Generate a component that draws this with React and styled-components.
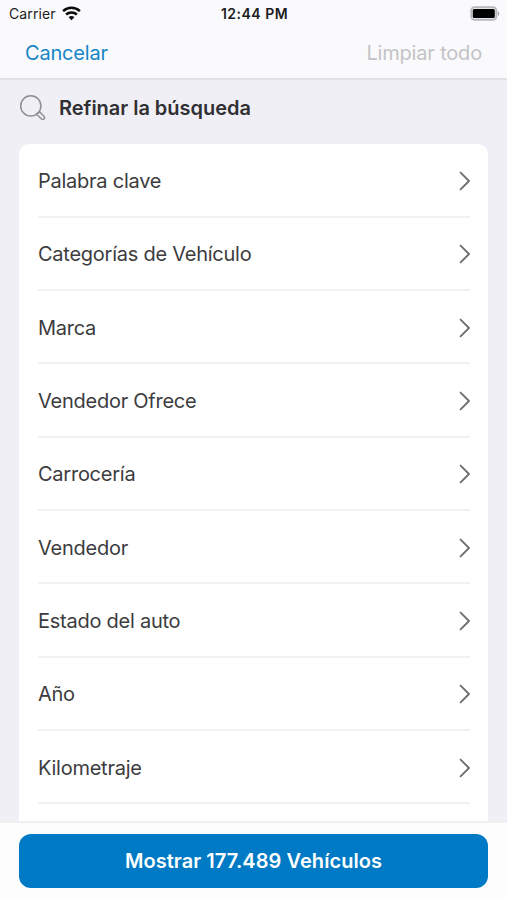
import styled, { createGlobalStyle } from "styled-components";

const GlobalStyle = createGlobalStyle`
    * {
        box-sizing: border-box;
    }
    body {
        margin: 0;
        font-family: Inter, "Liberation Sans", sans-serif;
        background: #f0eff5;
    }
`;

const Screen = styled.div`
    width: 100%;
    height: 100vh;
    display: flex;
    flex-direction: column;
    overflow: hidden;
    background: #f0eff5;
`;

const Header = styled.header`
    flex: none;
    height: 80px;
    background: #fafafc;
    border-bottom: 2px solid #e2e2e6;
`;

const StatusBar = styled.div`
    height: 27px;
    padding: 0 7px 0 9px;
    display: grid;
    grid-template-columns: 1fr auto 1fr;
    align-items: center;
    color: #1c1c1e;
`;

const Carrier = styled.div`
    display: flex;
    align-items: center;
    gap: 6px;
    font-size: 14px;
    letter-spacing: 0.1px;
`;

const Clock = styled.div`
    font-size: 14px;
    font-weight: 600;
    letter-spacing: 0.5px;
`;

const BatteryIcon = styled.svg`
    justify-self: end;
`;

const NavBar = styled.nav`
    height: 51px;
    padding: 0 25px;
    display: flex;
    justify-content: space-between;
    align-items: center;
`;

const NavButton = styled.button`
    padding: 0;
    border: 0;
    background: transparent;
    font-family: inherit;
    font-size: 20px;
    letter-spacing: -0.18px;
    color: ${props => props.disabled ? "#c3c3c6" : "#1686c7"};
    cursor: pointer;
`;

const Content = styled.main`
    flex: 1;
    min-height: 0;
    overflow: hidden;
    padding: 0 19px;
`;

const TitleRow = styled.div`
    height: 64px;
    padding-bottom: 8px;
    display: flex;
    align-items: center;
    gap: 12px;
`;

const Title = styled.h1`
    margin: 0;
    font-size: 20px;
    font-weight: 600;
    letter-spacing: -0.03px;
    color: #303034;
`;

const FilterList = styled.ul`
    margin: 0;
    padding: 0.5px 18px 0 19px;
    height: 760px;
    list-style: none;
    border-radius: 10px;
    background: #fff;
`;

const FilterRow = styled.li`
    height: 73.3px;
    padding-top: 2px;
    display: flex;
    justify-content: space-between;
    align-items: center;
    border-bottom: 2px solid #f1f1f3;
`;

const FilterName = styled.span`
    font-size: 20px;
    letter-spacing: -0.25px;
    color: #3c3c3e;
`;

const Footer = styled.footer`
    flex: none;
    height: 79px;
    padding: 11px 19px 0;
    border-top: 2px solid #f0f0f3;
    background: #fdfdfe;
`;

const SubmitButton = styled.button`
    width: 100%;
    height: 54px;
    padding: 0;
    border: 0;
    border-radius: 12px;
    background: #007ac4;
    font-family: inherit;
    font-size: 20px;
    font-weight: 600;
    letter-spacing: 0.06px;
    color: #fff;
    cursor: pointer;
`;

const filters = [
    "Palabra clave",
    "Categorías de Vehículo",
    "Marca",
    "Vendedor Ofrece",
    "Carrocería",
    "Vendedor",
    "Estado del auto",
    "Año",
    "Kilometraje",
];

const Wifi = () => (
    <svg width="19" height="15" viewBox="0 0 19 15" fill="none" stroke="#0b0b0c" strokeWidth="2.5">
        <path d="M1.1 5.1C5.8.7 13.2.7 17.9 5.1" />
        <path d="M4.1 8.5c3-2.8 7.8-2.8 10.8 0" />
        <path d="M6.6 11.2c1.6-1.5 4.2-1.5 5.8 0L9.5 14.3z" fill="#0b0b0c" stroke="none" />
    </svg>
)

const Battery = () => (
    <BatteryIcon width="30" height="15" viewBox="0 0 30 15">
        <rect x="1.2" y="1.2" width="25.2" height="12.6" rx="3.4" fill="#e4e4e6" stroke="#b8b8bb" strokeWidth="1.8" />
        <rect x="2.8" y="2.9" width="22" height="9.2" rx="1.5" fill="#000" />
        <path d="M27.8 5.2c2 .7 2 3.9 0 4.6z" fill="#a5a5a8" />
    </BatteryIcon>
)

const SearchIcon = () => (
    <svg width="28" height="28" viewBox="0 0 28 28" fill="none" stroke="#8e8e93" strokeWidth="1.5">
        <circle cx="11.8" cy="11.9" r="10.1" />
        <path d="M17.6 20.3l2.7-2.7 4.8 4.9c1.6 1.8-.8 4-2.5 2.5z" strokeLinejoin="round" />
    </svg>
)

const Chevron = () => (
    <svg width="12" height="20" viewBox="0 0 12 20" fill="none" stroke="#707073" strokeWidth="1.9">
        <path d="M2.6 1.6l8.4 8.4-8.4 8.4" strokeLinecap="round" strokeLinejoin="round" />
    </svg>
)

const App = () => {
    return (
        <Screen>
            <GlobalStyle />
            <Header>
                <StatusBar>
                    <Carrier>Carrier <Wifi /></Carrier>
                    <Clock>12:44 PM</Clock>
                    <Battery />
                </StatusBar>
                <NavBar>
                    <NavButton>Cancelar</NavButton>
                    <NavButton disabled>Limpiar todo</NavButton>
                </NavBar>
            </Header>
            <Content>
                <TitleRow>
                    <SearchIcon />
                    <Title>Refinar la búsqueda</Title>
                </TitleRow>
                <FilterList>
                    {filters.map((name) => (
                        <FilterRow key={name}>
                            <FilterName>{name}</FilterName>
                            <Chevron />
                        </FilterRow>
                    ))}
                </FilterList>
            </Content>
            <Footer>
                <SubmitButton>Mostrar 177.489 Vehículos</SubmitButton>
            </Footer>
        </Screen>
    )
}

export default App
